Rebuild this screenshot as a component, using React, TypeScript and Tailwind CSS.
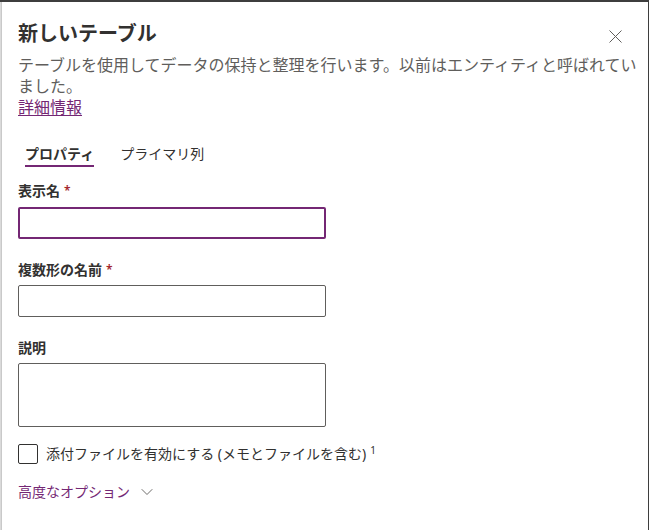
import { ChevronDown } from 'lucide-react';

const font = { fontFamily: '"Noto Sans", "Noto Sans CJK JP", sans-serif' };

function Label({ text, required }: { text: string; required?: boolean }) {
  return (
    <div className="flex items-center text-[14px] leading-[20px] font-semibold text-[#323130]">
      <span>{text}</span>
      {required && <span className="pl-[4px] text-[#a4262c] text-[12px]">*</span>}
    </div>
  );
}

export default function App() {
  return (
    <div className="w-[649px] h-[530px] flex flex-col bg-white overflow-hidden" style={font}>
      <div className="h-[2px] bg-[#3e3e3e]" />
      <div className="flex flex-1">
        {/* page behind the panel */}
        <div className="w-[4px] bg-[#dadada] border-r border-[#c9c9c9]" />

        {/* Panel */}
        <div className="flex-1 pl-4 pt-[18px] relative">
          <button className="absolute right-[25px] top-[26px] w-[16px] h-[16px] flex items-center justify-center text-[#605e5c]">
            <svg width="13" height="13" viewBox="0 0 13 13" fill="none" stroke="currentColor" strokeWidth="1">
              <path d="M0.5 0.5 L12.5 12.5 M12.5 0.5 L0.5 12.5" />
            </svg>
          </button>

          <h1 className="text-[20px] leading-[28px] font-semibold text-[#323130]">新しいテーブル</h1>
          <p className="mt-[7px] w-[630px] text-[16px] leading-[21px] text-[#605e5c]">
            テーブルを使用してデータの保持と整理を行います。以前はエンティティと呼ばれていました。
          </p>
          <a href="#" className="block w-fit text-[16px] leading-[21px] text-[#742774] underline underline-offset-2">
            詳細情報
          </a>

          {/* Tabs */}
          <div className="mt-[26px] flex gap-[11px] text-[14px] leading-[20px]">
            <div className="px-[7px] flex flex-col">
              <span className="font-semibold text-[#323130]">プロパティ</span>
              <span className="mt-[1px] h-[2px] bg-[#742774]" />
            </div>
            <div className="px-[8px] text-[#323130]">プライマリ列</div>
          </div>

          <div className="mt-[14px]">
            <Label text="表示名" required />
            <input className="mt-[6px] w-[308px] h-[32px] border-2 border-[#742774] rounded-[2px] outline-none px-2 text-[14px]" />
          </div>

          <div className="mt-[21px]">
            <Label text="複数形の名前" required />
            <input className="mt-[5px] w-[308px] h-[32px] border border-[#605e5c] rounded-[2px] outline-none px-2 text-[14px]" />
          </div>

          <div className="mt-[21px]">
            <Label text="説明" />
            <textarea className="mt-[5px] block w-[308px] h-[64px] border border-[#605e5c] rounded-[2px] outline-none px-2 text-[14px] resize-none" />
          </div>

          <label className="mt-[17px] flex items-center gap-2 text-[14px] leading-[20px] text-[#323130]">
            <span className="w-[20px] h-[20px] border border-[#323130] rounded-[2px] shrink-0" />
            <span>
              添付ファイルを有効にする (メモとファイルを含む)
              <sup className="ml-[4px] text-[10px]">1</sup>
            </span>
          </label>

          <button className="mt-[18px] flex items-center gap-[7px] text-[14px] leading-[20px] text-[#742774]">
            <span>高度なオプション</span>
            <ChevronDown size={20} strokeWidth={1.1} className="text-[#605e5c]" />
          </button>
        </div>

        <div className="w-[2px] bg-[#3e3e3e]" />
        <div className="w-[1px] bg-white" />
      </div>
    </div>
  );
}
